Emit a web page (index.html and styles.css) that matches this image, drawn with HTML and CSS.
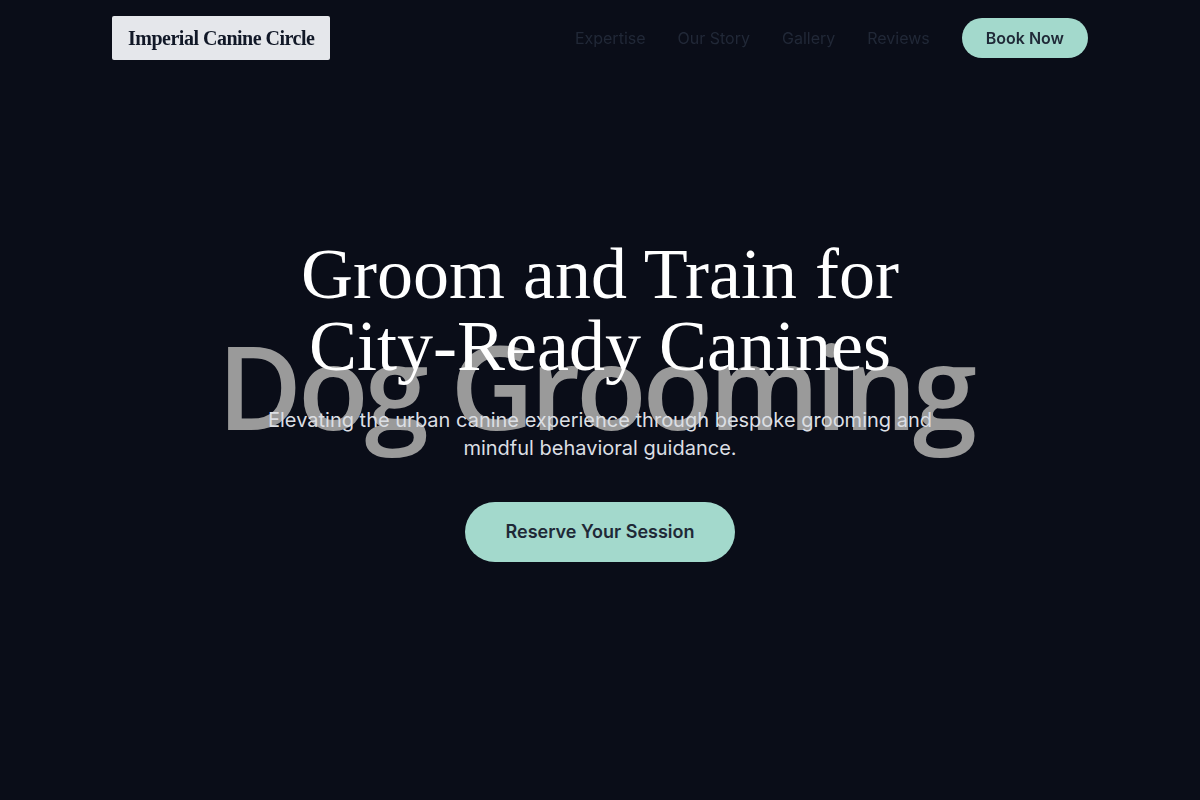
FILE: index.html
```html
<!DOCTYPE html>
<html lang="en">
<head>
<meta charset="utf-8">
<title>Imperial Canine Circle</title>
<link rel="stylesheet" href="styles.css">
</head>
<body>
<header class="site-header">
  <div class="header-inner">
    <a class="logo" href="#">Imperial Canine Circle</a>
    <nav class="nav">
      <a class="nav-link" href="#">Expertise</a>
      <a class="nav-link" href="#">Our Story</a>
      <a class="nav-link" href="#">Gallery</a>
      <a class="nav-link" href="#">Reviews</a>
      <a class="nav-cta" href="#">Book Now</a>
    </nav>
  </div>
</header>
<main class="hero">
  <div class="hero-bg-word" aria-hidden="true">Dog Grooming</div>
  <div class="hero-content">
    <h1 class="hero-title">Groom and Train for<br>City-Ready Canines</h1>
    <p class="hero-sub">Elevating the urban canine experience through bespoke grooming and mindful behavioral guidance.</p>
    <a class="hero-cta" href="#">Reserve Your Session</a>
  </div>
</main>
</body>
</html>
```

FILE: styles.css
```css
* { box-sizing: border-box; }
html, body { margin: 0; padding: 0; }
body {
  background: #0a0d18;
  font-family: Inter, "Noto Sans", sans-serif;
  color: #e5e7eb;
  min-height: 100vh;
}
a { text-decoration: none; }

.site-header {
  position: fixed;
  top: 0;
  left: 0;
  right: 0;
  z-index: 10;
}
.header-inner {
  max-width: 1024px;
  margin: 0 auto;
  padding: 16px 24px;
  display: flex;
  align-items: center;
  justify-content: space-between;
}
.logo {
  display: block;
  background: #e5e7eb;
  color: #111827;
  font-family: "Liberation Serif", "Times New Roman", serif;
  font-weight: 700;
  font-size: 20px;
  line-height: 28px;
  letter-spacing: -0.025em;
  padding: 8px 16px;
  border-radius: 2px;
}
.nav {
  display: flex;
  align-items: center;
  gap: 32px;
}
.nav-link {
  font-size: 16px;
  line-height: 24px;
  color: #212837;
}
.nav-cta {
  background: #a3d9cc;
  color: #1f2937;
  font-size: 16px;
  font-weight: 600;
  line-height: 24px;
  padding: 8px 24px;
  border-radius: 9999px;
}

.hero {
  position: relative;
  min-height: 800px;
  display: flex;
  align-items: center;
  justify-content: center;
  overflow: hidden;
}
.hero-bg-word {
  position: absolute;
  left: 50%;
  top: 50%;
  transform: translate(calc(-50% - 5px), calc(-50% - 15px));
  font-family: "Open Sans", "Noto Sans", sans-serif;
  font-weight: 600;
  font-size: 116px;
  line-height: 1;
  letter-spacing: -0.037em;
  color: #9a9a9a;
  white-space: nowrap;
  z-index: 0;
}
.hero-content {
  position: relative;
  z-index: 1;
  display: flex;
  flex-direction: column;
  align-items: center;
  text-align: center;
  padding: 0 24px;
}
.hero-title {
  margin: 0;
  font-family: "Liberation Serif", "Times New Roman", serif;
  font-weight: 400;
  font-size: 72px;
  line-height: 1;
  color: #ffffff;
}
.hero-sub {
  margin: 24px 0 0;
  max-width: 680px;
  font-size: 20px;
  line-height: 28px;
  color: #dcdfe4;
}
.hero-cta {
  margin-top: 40px;
  background: #a3d9cc;
  color: #1f2937;
  font-size: 18px;
  font-weight: 600;
  line-height: 24px;
  padding: 18px 40px;
  border-radius: 9999px;
}
```
